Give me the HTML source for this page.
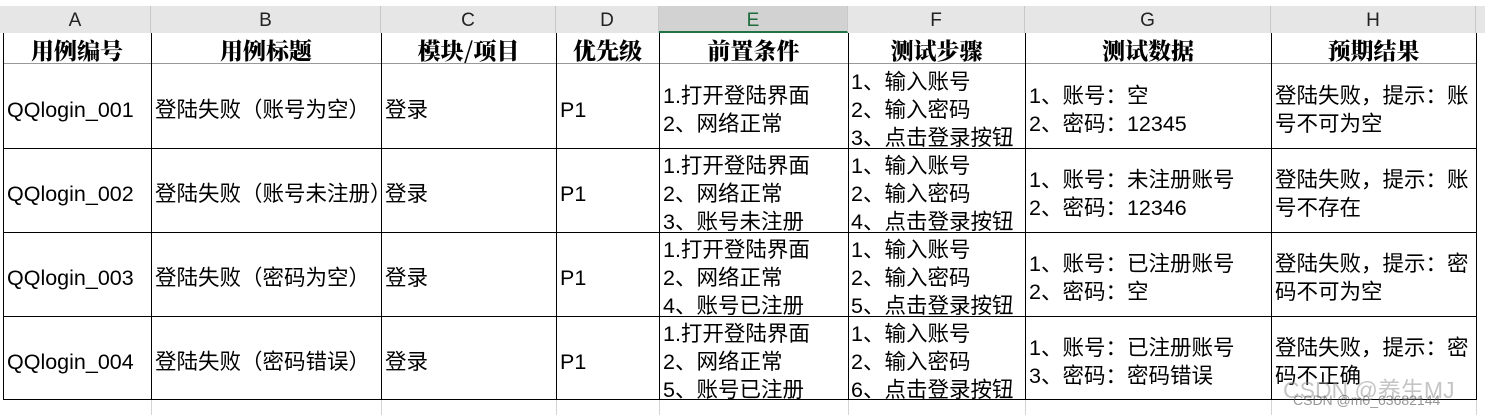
<!DOCTYPE html>
<html><head><meta charset="utf-8"><style>
body{margin:0;width:1485px;height:415px;overflow:hidden;background:#fff;position:relative;font-family:"Liberation Sans","Noto Sans CJK SC",sans-serif;color:#000}
.hd{position:absolute;top:6px;height:27px;background:#e6e6e6;border-right:1px solid #c8c8c8;box-sizing:border-box;text-align:center;font-size:19px;line-height:29px;color:#222}
.c{position:absolute;box-sizing:border-box;font-size:21.5px;line-height:28px;white-space:nowrap;overflow:hidden;display:flex;flex-direction:column;justify-content:center;padding-left:4px;padding-top:7px}
.h{font-family:"Noto Serif CJK SC",serif;font-weight:900;font-size:23px;text-align:center;align-items:center;padding:3px 0 0 0;line-height:30px}
.vl{position:absolute;width:1px;background:#000}
.hl{position:absolute;height:1px;background:#000;left:3px;width:1473px}
.gl{position:absolute;width:1px;background:#d4d4d4;top:400px;height:15px}
</style></head><body>
<div class="hd" style="left:0;width:151px">A</div>
<div class="hd" style="left:151px;width:230px">B</div>
<div class="hd" style="left:381px;width:175px">C</div>
<div class="hd" style="left:556px;width:103px">D</div>
<div class="hd" style="left:659px;width:189px;background:#d2d2d2;color:#1e6b3c;border-bottom:2px solid #217346">E</div>
<div class="hd" style="left:848px;width:177px">F</div>
<div class="hd" style="left:1025px;width:246px">G</div>
<div class="hd" style="left:1271px;width:205px">H</div>
<div class="hd" style="left:1476px;width:9px;border:none"></div>

<div class="c h" style="left:3px;top:33px;width:148px;height:30px">用例编号</div>
<div class="c h" style="left:151px;top:33px;width:230px;height:30px">用例标题</div>
<div class="c h" style="left:381px;top:33px;width:175px;height:30px">模块/项目</div>
<div class="c h" style="left:556px;top:33px;width:103px;height:30px">优先级</div>
<div class="c h" style="left:659px;top:33px;width:189px;height:30px">前置条件</div>
<div class="c h" style="left:848px;top:33px;width:177px;height:30px">测试步骤</div>
<div class="c h" style="left:1025px;top:33px;width:246px;height:30px">测试数据</div>
<div class="c h" style="left:1271px;top:33px;width:205px;height:30px">预期结果</div>

<div class="c" style="left:3px;top:64px;width:148px;height:84px">QQlogin_001</div>
<div class="c" style="left:151px;top:64px;width:240px;height:84px">登陆失败（账号为空）</div>
<div class="c" style="left:381px;top:64px;width:175px;height:84px">登录</div>
<div class="c" style="left:556px;top:64px;width:103px;height:84px">P1</div>
<div class="c" style="left:659px;top:64px;width:189px;height:84px"><div>1.打开登陆界面</div><div>2、网络正常</div></div>
<div class="c" style="left:848px;top:64px;width:177px;height:84px;padding-left:3px"><div>1、输入账号</div><div>2、输入密码</div><div>3、点击登录按钮</div></div>
<div class="c" style="left:1025px;top:64px;width:246px;height:84px"><div>1、账号：空</div><div>2、密码：12345</div></div>
<div class="c" style="left:1271px;top:64px;width:205px;height:84px"><div>登陆失败，提示：账</div><div>号不可为空</div></div>

<div class="c" style="left:3px;top:148px;width:148px;height:84px">QQlogin_002</div>
<div class="c" style="left:151px;top:148px;width:230px;height:84px">登陆失败（账号未注册）</div>
<div class="c" style="left:381px;top:148px;width:175px;height:84px">登录</div>
<div class="c" style="left:556px;top:148px;width:103px;height:84px">P1</div>
<div class="c" style="left:659px;top:148px;width:189px;height:84px"><div>1.打开登陆界面</div><div>2、网络正常</div><div>3、账号未注册</div></div>
<div class="c" style="left:848px;top:148px;width:177px;height:84px;padding-left:3px"><div>1、输入账号</div><div>2、输入密码</div><div>4、点击登录按钮</div></div>
<div class="c" style="left:1025px;top:148px;width:246px;height:84px"><div>1、账号：未注册账号</div><div>2、密码：12346</div></div>
<div class="c" style="left:1271px;top:148px;width:205px;height:84px"><div>登陆失败，提示：账</div><div>号不存在</div></div>

<div class="c" style="left:3px;top:232px;width:148px;height:84px">QQlogin_003</div>
<div class="c" style="left:151px;top:232px;width:230px;height:84px">登陆失败（密码为空）</div>
<div class="c" style="left:381px;top:232px;width:175px;height:84px">登录</div>
<div class="c" style="left:556px;top:232px;width:103px;height:84px">P1</div>
<div class="c" style="left:659px;top:232px;width:189px;height:84px"><div>1.打开登陆界面</div><div>2、网络正常</div><div>4、账号已注册</div></div>
<div class="c" style="left:848px;top:232px;width:177px;height:84px;padding-left:3px"><div>1、输入账号</div><div>2、输入密码</div><div>5、点击登录按钮</div></div>
<div class="c" style="left:1025px;top:232px;width:246px;height:84px"><div>1、账号：已注册账号</div><div>2、密码：空</div></div>
<div class="c" style="left:1271px;top:232px;width:205px;height:84px"><div>登陆失败，提示：密</div><div>码不可为空</div></div>

<div class="c" style="left:3px;top:316px;width:148px;height:84px">QQlogin_004</div>
<div class="c" style="left:151px;top:316px;width:230px;height:84px">登陆失败（密码错误）</div>
<div class="c" style="left:381px;top:316px;width:175px;height:84px">登录</div>
<div class="c" style="left:556px;top:316px;width:103px;height:84px">P1</div>
<div class="c" style="left:659px;top:316px;width:189px;height:84px"><div>1.打开登陆界面</div><div>2、网络正常</div><div>5、账号已注册</div></div>
<div class="c" style="left:848px;top:316px;width:177px;height:84px;padding-left:3px"><div>1、输入账号</div><div>2、输入密码</div><div>6、点击登录按钮</div></div>
<div class="c" style="left:1025px;top:316px;width:246px;height:84px"><div>1、账号：已注册账号</div><div>3、密码：密码错误</div></div>
<div class="c" style="left:1271px;top:316px;width:205px;height:84px"><div>登陆失败，提示：密</div><div>码不正确</div></div>

<div class="hl" style="top:63px;background:#999"></div>
<div class="hl" style="top:148px"></div>
<div class="hl" style="top:232px"></div>
<div class="hl" style="top:316px"></div>
<div class="hl" style="top:399px"></div>
<div class="vl" style="left:3px;top:33px;height:367px"></div>
<div class="vl" style="left:151px;top:33px;height:367px"></div>
<div class="vl" style="left:381px;top:33px;height:367px"></div>
<div class="vl" style="left:556px;top:33px;height:367px"></div>
<div class="vl" style="left:659px;top:33px;height:367px"></div>
<div class="vl" style="left:848px;top:33px;height:367px"></div>
<div class="vl" style="left:1025px;top:33px;height:367px"></div>
<div class="vl" style="left:1271px;top:33px;height:367px"></div>
<div class="vl" style="left:1476px;top:33px;height:367px"></div>
<div class="gl" style="left:151px"></div><div class="gl" style="left:381px"></div><div class="gl" style="left:556px"></div><div class="gl" style="left:659px"></div><div class="gl" style="left:848px"></div><div class="gl" style="left:1025px"></div><div class="gl" style="left:1271px"></div><div class="gl" style="left:1476px"></div>
<div style="position:absolute;left:1283px;top:371px;font-size:23px;color:rgba(150,150,150,0.55);white-space:nowrap">CSDN @养生MJ</div>
<div style="position:absolute;left:1293px;top:392px;font-size:14px;color:rgba(80,80,80,0.6);white-space:nowrap">CSDN @m0_63682144</div>
</body></html>
